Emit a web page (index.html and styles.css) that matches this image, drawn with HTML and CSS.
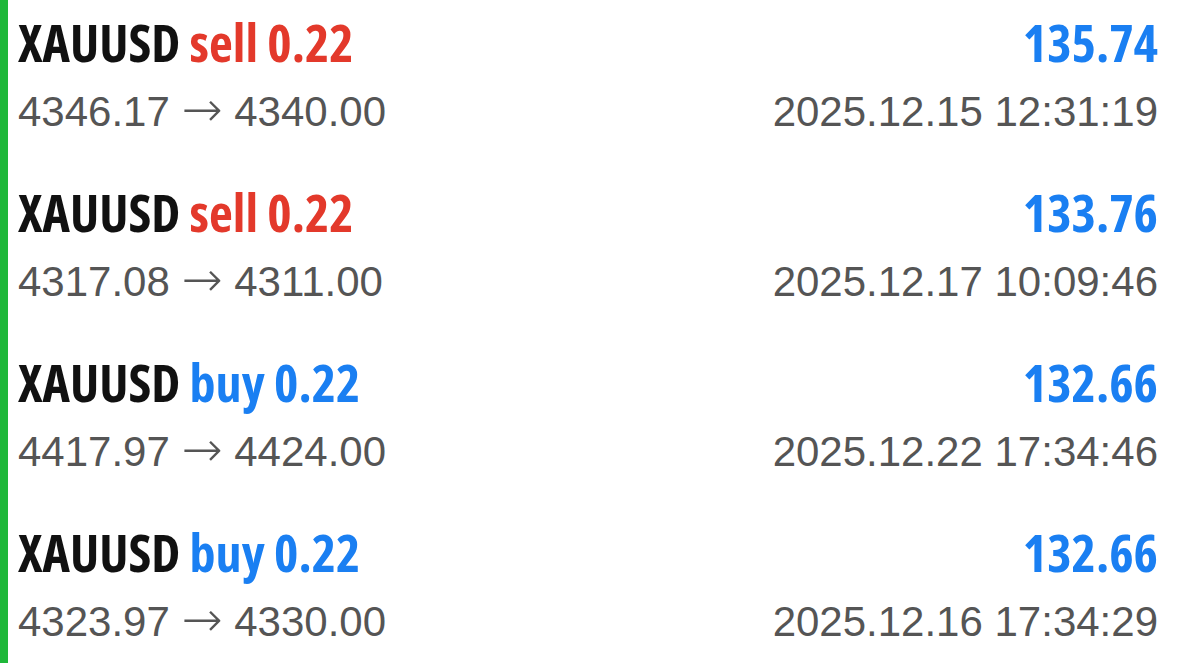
FILE: index.html
```html
<!DOCTYPE html>
<html lang="en">
<head>
    <meta charset="UTF-8">
    <title>历史</title>
    <link rel="stylesheet" href="styles.css">
</head>
<body>
<div class="list">
    <div class="row">
        <div class="line">
            <span class="title">XAUUSD <span class="sell">sell 0.22</span></span>
            <span class="profit">135.74</span>
        </div>
        <div class="line sub">
            <span>4346.17 <span class="arrow">→</span> 4340.00</span>
            <span>2025.12.15 12:31:19</span>
        </div>
    </div>
    <div class="row">
        <div class="line">
            <span class="title">XAUUSD <span class="sell">sell 0.22</span></span>
            <span class="profit">133.76</span>
        </div>
        <div class="line sub">
            <span>4317.08 <span class="arrow">→</span> 4311.00</span>
            <span>2025.12.17 10:09:46</span>
        </div>
    </div>
    <div class="row">
        <div class="line">
            <span class="title">XAUUSD <span class="buy">buy 0.22</span></span>
            <span class="profit">132.66</span>
        </div>
        <div class="line sub">
            <span>4417.97 <span class="arrow">→</span> 4424.00</span>
            <span>2025.12.22 17:34:46</span>
        </div>
    </div>
    <div class="row">
        <div class="line">
            <span class="title">XAUUSD <span class="buy">buy 0.22</span></span>
            <span class="profit">132.66</span>
        </div>
        <div class="line sub">
            <span>4323.97 <span class="arrow">→</span> 4330.00</span>
            <span>2025.12.16 17:34:29</span>
        </div>
    </div>
</div>
</body>
</html>
```

FILE: styles.css
```css
*{
    padding: 0;
    margin: 0;
}
body{
    background-color: #ffffff;
    font-family: "Liberation Sans", Arial, sans-serif;
}
.list{
    border-left: 8px solid #1fb83a;
    padding-left: 10px;
    padding-right: 20px;
    height: 663px;
    box-sizing: border-box;
}
.row{
    height: 170px;
    padding-top: 12px;
    box-sizing: border-box;
}
.line{
    display: flex;
    justify-content: space-between;
    align-items: baseline;
}
.title, .profit{
    font-family: "Open Sans", sans-serif;
    font-stretch: 75%;
    font-weight: bold;
    font-size: 52px;
    line-height: 60px;
    color: #111111;
}
.sell{
    color: #e3392b;
}
.buy, .profit{
    color: #1a7ff2;
}
.sub{
    margin-top: 15px;
    font-size: 42px;
    line-height: 50px;
    color: #555555;
}
.arrow{
    font-family: "DejaVu Sans", sans-serif;
    font-weight: 200;
    font-size: 49px;
    line-height: 40px;
}
```
